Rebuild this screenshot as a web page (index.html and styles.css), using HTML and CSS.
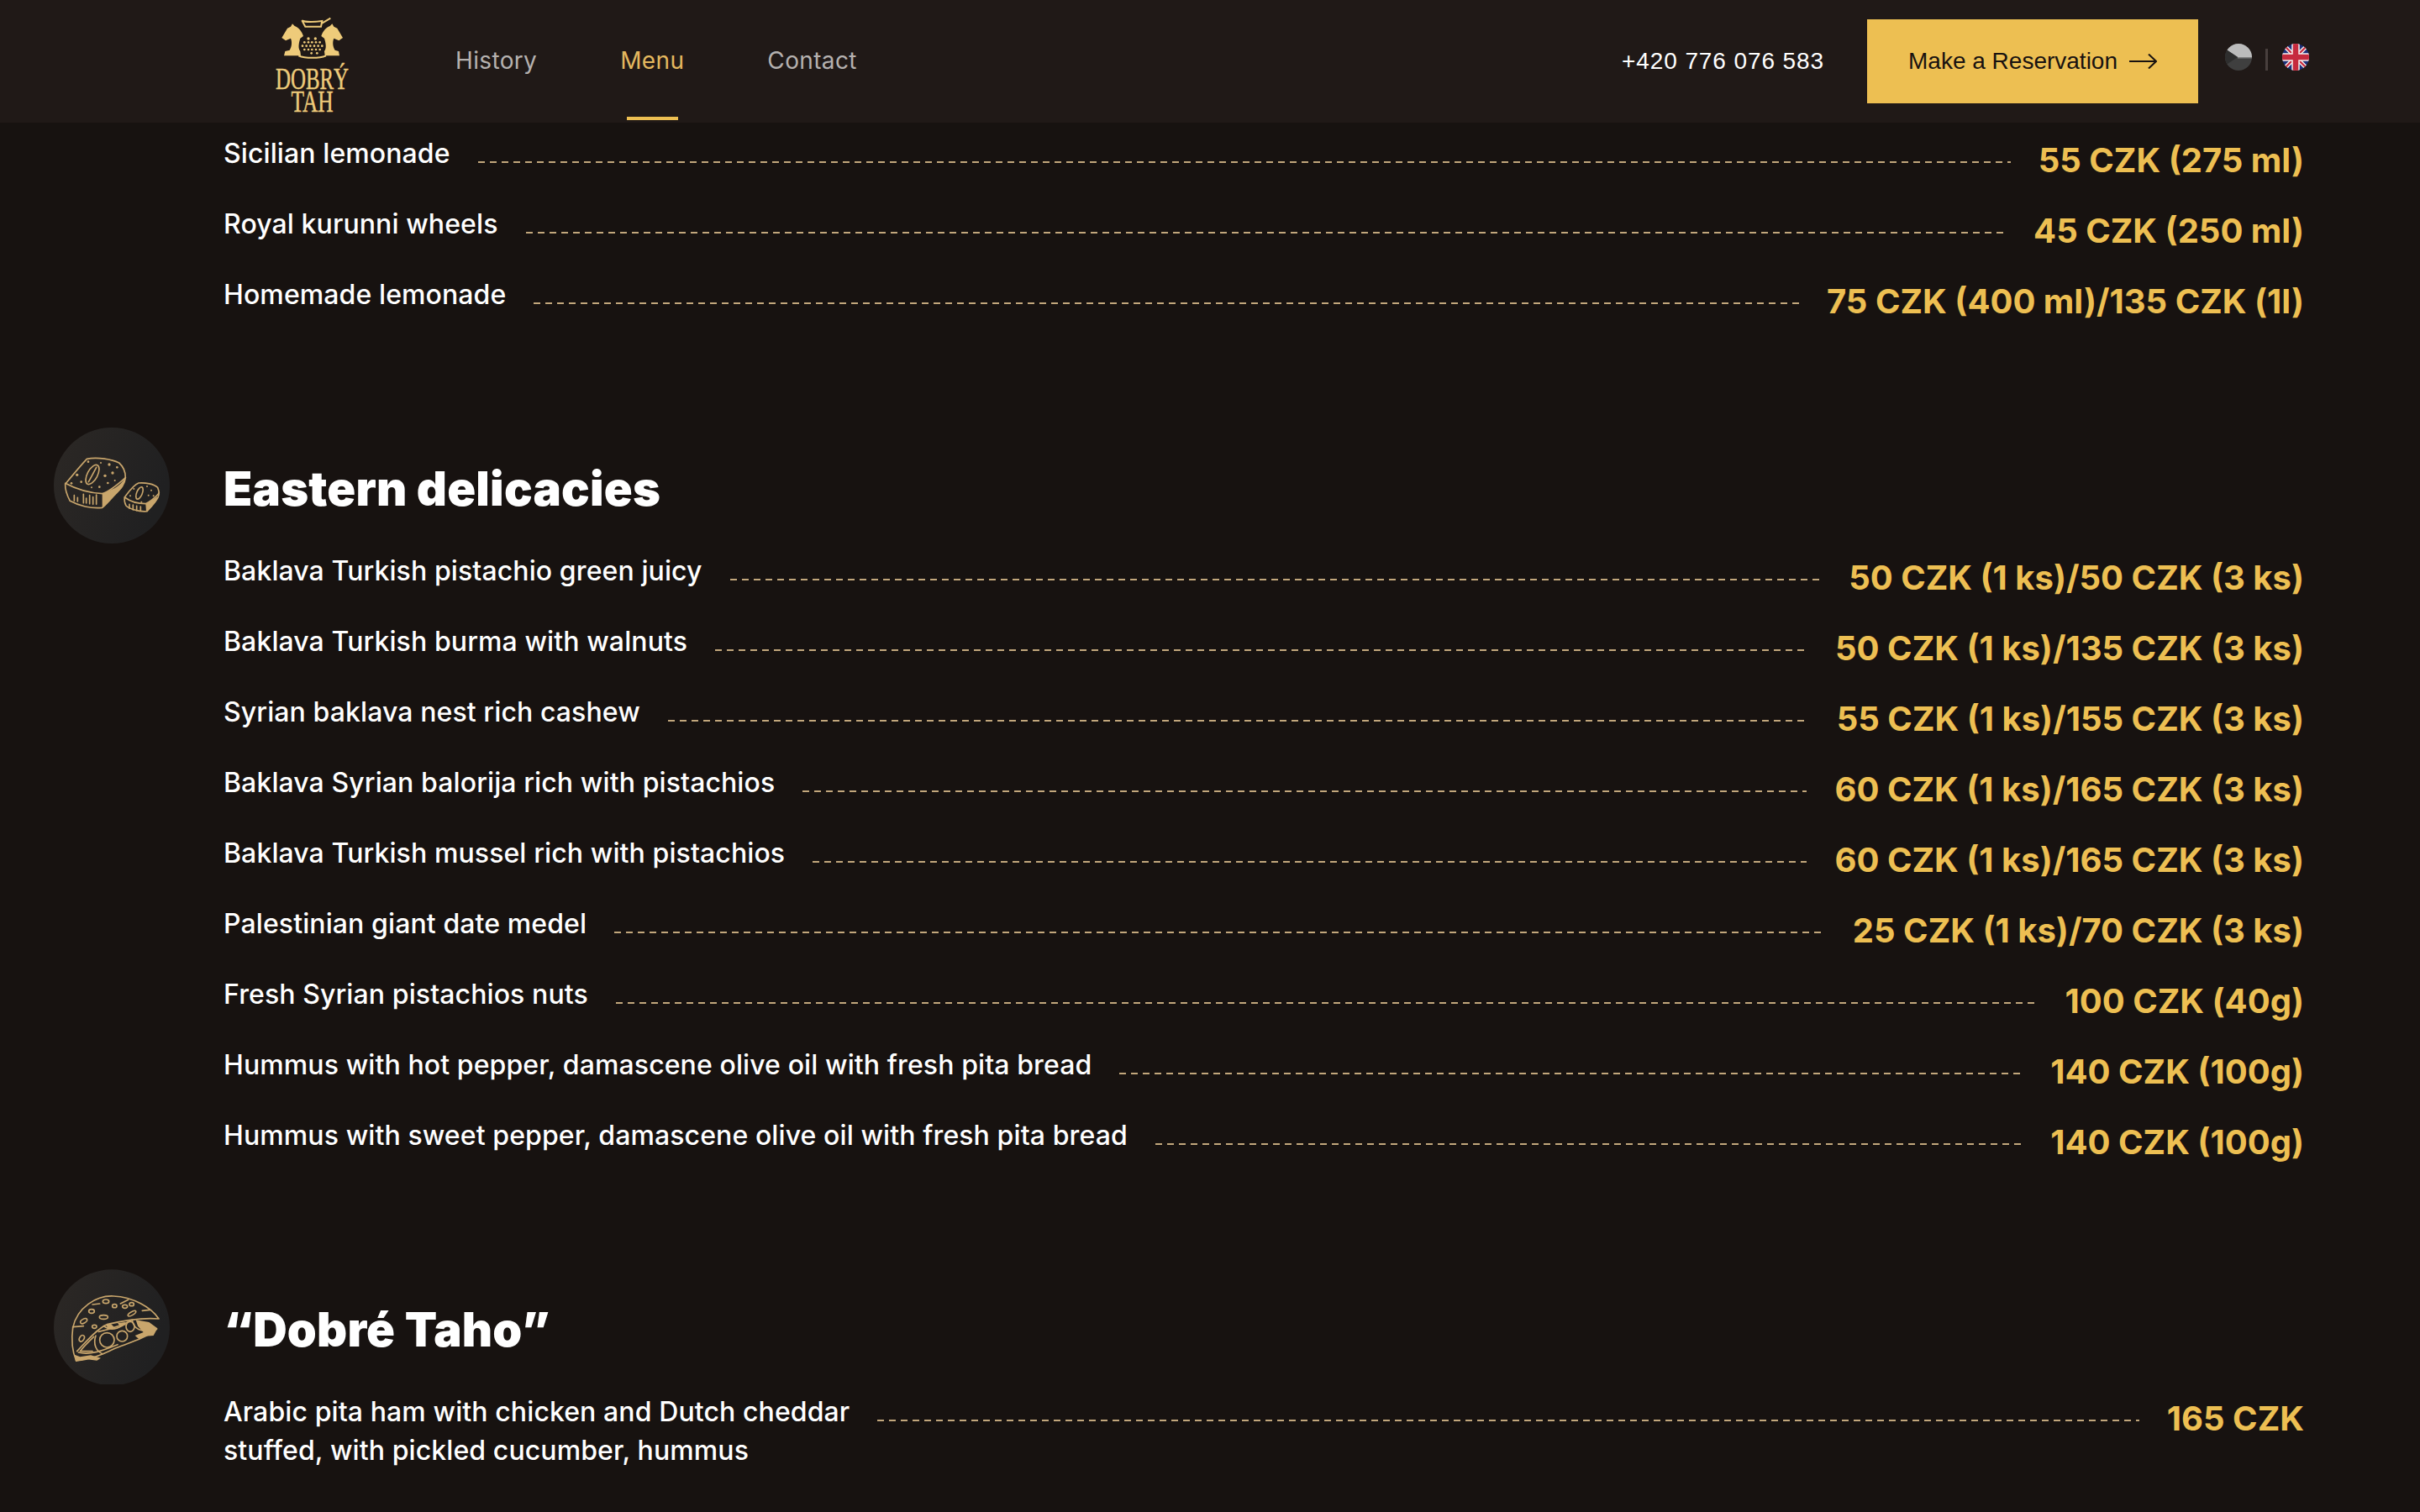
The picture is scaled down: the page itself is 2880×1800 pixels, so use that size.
FILE: index.html
```html
<!DOCTYPE html>
<html lang="en">
<head>
<meta charset="utf-8">
<title>Dobrý Tah – Menu</title>
<link rel="stylesheet" href="styles.css">
</head>
<body>
<header class="topbar">
  <a class="logo" href="#">
    <svg class="logo-mark" width="150" height="135">
      <g transform="scale(0.3333)">
      <g class="logo-fill">
        <path d="M106 102 L126 68 L138 62 L144 52 L152 60 C166 65 178 80 183 96 L172 104 C167 120 163 138 172 150 L174 166 L114 166 L118 150 L134 146 C141 135 144 118 138 104 L120 112 Z"/>
        <path d="M324 102 L304 68 L292 62 L286 52 L278 60 C264 65 252 80 247 96 L258 104 C263 120 267 138 258 150 L260 166 L312 166 L309 150 L296 146 C289 135 286 118 292 104 L310 112 Z"/>
        <circle cx="201" cy="105" r="5"/><circle cx="226" cy="105" r="5"/>
        <circle cx="187" cy="118" r="4"/><circle cx="201" cy="118" r="4"/><circle cx="214" cy="118" r="4"/><circle cx="228" cy="118" r="4"/><circle cx="242" cy="118" r="4"/>
        <circle cx="180" cy="131" r="4"/><circle cx="194" cy="131" r="4"/><circle cx="208" cy="131" r="4"/><circle cx="222" cy="131" r="4"/><circle cx="236" cy="131" r="4"/><circle cx="250" cy="131" r="4"/>
        <circle cx="187" cy="144" r="4"/><circle cx="201" cy="144" r="4"/><circle cx="214" cy="144" r="4"/><circle cx="228" cy="144" r="4"/><circle cx="242" cy="144" r="4"/>
        <circle cx="212" cy="157" r="4"/><circle cx="232" cy="157" r="4"/>
      </g>
      <path class="logo-line" d="M178 40 C190 48 235 44 250 42 L246 62 L190 62 Z M250 50 L280 32 M166 166 C190 176 240 176 264 166"/>
      </g>
      <text class="logo-word" x="28" y="94.5" textLength="87" lengthAdjust="spacingAndGlyphs">DOBRÝ</text>
      <text class="logo-word" x="46.5" y="122" textLength="50" lengthAdjust="spacingAndGlyphs">TAH</text>
    </svg>
  </a>
  <nav class="nav">
    <a class="nav-link" href="#">History</a>
    <a class="nav-link nav-active" href="#">Menu</a>
    <a class="nav-link" href="#">Contact</a>
  </nav>
  <div class="top-actions">
    <a class="phone" href="#">+420 776 076 583</a>
    <a class="reserve" href="#">Make a Reservation
      <svg class="arrow" viewBox="0 0 33 18"><path d="M0 9 H32 M23 0.5 L32 9 L23 17.5"/></svg>
    </a>
    <div class="langs">
      <svg class="flag" viewBox="0 0 32 32">
        <clipPath id="c1"><circle cx="16" cy="16" r="16"/></clipPath>
        <g clip-path="url(#c1)">
          <rect width="32" height="32" fill="#3f3f3f"/>
          <path d="M0 6 L15 16 H32 V0 H0 Z" fill="#bcbcbc"/>
          <path d="M0 6 L15 16 L0 26 Z" fill="#2e2e2e"/>
          <rect x="15" y="16" width="17" height="1.5" fill="#7e7e7e"/>
        </g>
      </svg>
      <span class="lang-sep"></span>
      <svg class="flag" viewBox="0 0 32 32">
        <clipPath id="c2"><circle cx="16" cy="16" r="16"/></clipPath>
        <g clip-path="url(#c2)">
          <rect width="32" height="32" fill="#1c2f7a"/>
          <path d="M0 0 L32 32 M32 0 L0 32" stroke="#f4f0ee" stroke-width="5"/>
          <path d="M0 0 L32 32 M32 0 L0 32" stroke="#c8283c" stroke-width="2.2"/>
          <path d="M16 0 V32 M0 16 H32" stroke="#f4f0ee" stroke-width="9.5"/>
          <path d="M16 0 V32 M0 16 H32" stroke="#c62a3e" stroke-width="6.5"/>
        </g>
      </svg>
    </div>
  </div>
</header>

<main class="menu">
  <section class="group">
    <div class="badge-slot"></div>
    <div class="group-body">
      <div class="row"><span class="name">Sicilian lemonade</span><span class="dash"></span><span class="price">55 CZK (275 ml)</span></div>
      <div class="row"><span class="name">Royal kurunni wheels</span><span class="dash"></span><span class="price">45 CZK (250 ml)</span></div>
      <div class="row"><span class="name">Homemade lemonade</span><span class="dash"></span><span class="price">75 CZK (400 ml)/135 CZK (1l)</span></div>
    </div>
  </section>

  <section class="group">
    <div class="badge-slot">
      <svg class="badge" viewBox="72 56 414 414">
        <defs>
          <linearGradient id="g1" x1="0" y1="0" x2="1" y2="0.4"><stop offset="0" stop-color="#2c2825"/><stop offset="1" stop-color="#202021"/></linearGradient>
        </defs>
        <circle cx="279" cy="263" r="207" fill="url(#g1)"/>
        <g class="ink">
          <path d="M113 258 C140 225 165 195 190 168 C230 160 280 170 305 182 C320 195 328 215 328 235 C325 262 310 275 290 295 C275 312 260 330 245 342 C205 346 160 335 130 318 C118 295 112 275 113 258 Z"/>
          <path d="M113 255 C150 275 200 290 245 292 C270 285 300 260 328 235"/>
          <ellipse cx="210" cy="224" rx="18" ry="38" transform="rotate(28 210 224)"/>
          <path d="M196 250 C205 235 215 215 224 198 M145 318 V298 M157 320 V306 M178 325 V294 M188 326 V308 M200 328 V298 M212 330 V304 M224 330 V296"/>
          <ellipse cx="378" cy="290" rx="10" ry="23" transform="rotate(22 378 290)"/>
          <path d="M325 305 C340 285 355 262 375 254 C400 252 430 258 443 270 C452 290 448 305 435 320 L405 355 C375 358 340 345 330 335 C325 325 323 315 325 305 Z"/>
          <path d="M325 305 C345 320 370 328 400 328 C420 318 435 305 448 290 M342 345 V330 M355 350 V332 M368 352 V336 M382 354 V338"/>
        </g>
        <g class="ink-fill">
          <path d="M245 292 L290 272 C305 262 318 250 325 238 C326 265 305 285 285 303 L245 342 Z"/>
          <path d="M400 330 L442 302 C442 320 420 345 402 356 Z"/>
          <circle cx="155" cy="225" r="5"/><circle cx="170" cy="250" r="4"/><circle cx="135" cy="255" r="4"/>
          <circle cx="195" cy="178" r="4"/><circle cx="240" cy="182" r="3"/><circle cx="270" cy="188" r="5"/><circle cx="298" cy="198" r="4"/>
          <circle cx="255" cy="228" r="5"/><circle cx="282" cy="218" r="5"/><circle cx="265" cy="254" r="4"/><circle cx="235" cy="268" r="4"/><circle cx="207" cy="270" r="3"/><circle cx="290" cy="245" r="3"/>
          <circle cx="405" cy="266" r="3"/><circle cx="420" cy="280" r="3"/><circle cx="345" cy="300" r="3"/><circle cx="358" cy="275" r="3"/><circle cx="410" cy="298" r="3"/><circle cx="428" cy="300" r="3"/><circle cx="385" cy="322" r="3"/>
        </g>
      </svg>
    </div>
    <div class="group-body">
      <h2 class="title">Eastern delicacies</h2>
      <div class="row"><span class="name">Baklava Turkish pistachio green juicy</span><span class="dash"></span><span class="price">50 CZK (1 ks)/50 CZK (3 ks)</span></div>
      <div class="row"><span class="name">Baklava Turkish burma with walnuts</span><span class="dash"></span><span class="price">50 CZK (1 ks)/135 CZK (3 ks)</span></div>
      <div class="row"><span class="name">Syrian baklava nest rich cashew</span><span class="dash"></span><span class="price">55 CZK (1 ks)/155 CZK (3 ks)</span></div>
      <div class="row"><span class="name">Baklava Syrian balorija rich with pistachios</span><span class="dash"></span><span class="price">60 CZK (1 ks)/165 CZK (3 ks)</span></div>
      <div class="row"><span class="name">Baklava Turkish mussel rich with pistachios</span><span class="dash"></span><span class="price">60 CZK (1 ks)/165 CZK (3 ks)</span></div>
      <div class="row"><span class="name">Palestinian giant date medel</span><span class="dash"></span><span class="price">25 CZK (1 ks)/70 CZK (3 ks)</span></div>
      <div class="row"><span class="name">Fresh Syrian pistachios nuts</span><span class="dash"></span><span class="price">100 CZK (40g)</span></div>
      <div class="row"><span class="name">Hummus with hot pepper, damascene olive oil with fresh pita bread</span><span class="dash"></span><span class="price">140 CZK (100g)</span></div>
      <div class="row"><span class="name">Hummus with sweet pepper, damascene olive oil with fresh pita bread</span><span class="dash"></span><span class="price">140 CZK (100g)</span></div>
    </div>
  </section>

  <section class="group">
    <div class="badge-slot">
      <svg class="badge" viewBox="72 56 414 414">
        <defs>
          <linearGradient id="g2" x1="0" y1="0" x2="1" y2="0.4"><stop offset="0" stop-color="#2c2825"/><stop offset="1" stop-color="#202021"/></linearGradient>
        </defs>
        <circle cx="279" cy="267" r="207" fill="url(#g2)"/>
        <g class="ink">
          <path d="M140 268 C155 195 225 152 285 155 C355 158 420 195 447 236 C400 232 330 240 262 256 C225 272 185 320 155 352"/>
          <path d="M140 268 C135 305 135 345 152 386"/>
          <path d="M140 265 L178 262 M210 185 L236 182 M310 182 L338 168 M388 207 L415 204"/>
          <ellipse cx="258" cy="174" rx="11" ry="7"/><ellipse cx="289" cy="190" rx="8" ry="6"/><ellipse cx="326" cy="192" rx="9" ry="6"/><ellipse cx="350" cy="184" rx="8" ry="6"/>
          <ellipse cx="207" cy="209" rx="10" ry="7"/><ellipse cx="351" cy="217" rx="16" ry="6" transform="rotate(-30 351 217)"/>
          <ellipse cx="250" cy="230" rx="15" ry="7"/><ellipse cx="179" cy="244" rx="13" ry="7" transform="rotate(-30 179 244)"/><ellipse cx="217" cy="264" rx="8" ry="6"/>
          <ellipse cx="172" cy="306" rx="8" ry="12" transform="rotate(30 172 306)"/>
          <path d="M152 386 C200 380 230 372 290 342 C340 322 400 305 440 272 M160 356 C200 366 240 352 300 328 M222 296 C212 326 222 352 248 362 M232 282 C280 272 320 258 352 240 M352 240 C356 270 382 288 432 272"/>
          <circle cx="262" cy="312" r="26"/><circle cx="316" cy="298" r="19"/><ellipse cx="345" cy="264" rx="15" ry="18"/>
          <path d="M215 300 C196 318 178 336 166 352 L210 352 M250 262 C268 276 290 276 318 260"/>
        </g>
        <path class="crumb" d="M150 388 L146 364 L166 372 L204 366 L240 376 L226 385 L192 381 Z M365 240 L412 248 L442 270 L428 296 L398 298 L378 310 L362 296 L392 284 L372 262 Z M258 258 L276 254 L290 268 L268 274 Z M300 252 L326 248 L330 258 L310 264 Z"/>
      </svg>
    </div>
    <div class="group-body">
      <h2 class="title">“Dobré Taho”</h2>
      <div class="row"><span class="name">Arabic pita ham with chicken and Dutch cheddar<br>stuffed, with pickled cucumber, hummus</span><span class="dash"></span><span class="price">165 CZK</span></div>
    </div>
  </section>
</main>
</body>
</html>
```

FILE: styles.css
```css
* { box-sizing: border-box; }
html, body { margin: 0; height: 1800px; overflow: hidden; }
body {
  background: #171210;
  color: #fff;
  font-family: Inter, "Liberation Sans", sans-serif;
}
a { color: inherit; text-decoration: none; }

.topbar {
  height: 146px;
  background: #201917;
  display: flex;
  align-items: center;
  padding-left: 300px;
  padding-right: 132px;
}
.logo { display: block; width: 150px; height: 135px; margin-top: 10px; flex: none; }
.logo-mark { display: block; }
.logo-fill { fill: #eecb7a; }
.logo-line { fill: none; stroke: #eecb7a; stroke-width: 6; }
.logo-word { fill: #eecb7a; stroke: #eecb7a; stroke-width: 0.5; font-family: "Liberation Serif", serif; font-size: 35px; }

.nav { display: flex; gap: 99px; margin-left: 92px; margin-top: -2px; }
.nav-link { position: relative; font-size: 28px; line-height: 40px; color: #b5b1af; letter-spacing: 0.35px; }
.nav-active { color: #e4b85f; }
.nav-active::after {
  content: "";
  position: absolute;
  left: 8px;
  right: 7px;
  top: 87px;
  height: 4px;
  background: #edbf52;
}

.top-actions { margin-left: auto; display: flex; align-items: center; }
.phone {
  font-family: "Liberation Sans", sans-serif;
  font-size: 28px;
  letter-spacing: 0.9px;
  margin-right: 51px;
}
.reserve {
  width: 394px;
  height: 100px;
  background: #edbf52;
  color: #181210;
  font-family: "Liberation Sans", sans-serif;
  font-size: 28px;
  display: flex;
  align-items: center;
  gap: 14px;
  padding-left: 49px;
  white-space: nowrap;
}
.arrow { width: 33px; height: 18px; fill: none; stroke: #181210; stroke-width: 2; flex: none; }
.langs { display: flex; align-items: center; margin-left: 32px; margin-top: -10px; }
.flag { width: 32px; height: 32px; display: block; }
.lang-sep { width: 3px; height: 26px; background: #483f3d; margin: 6px 17px 0 16px; }

.menu { padding: 11px 138px 0 64px; display: flex; flex-direction: column; gap: 100px; }
.group { display: grid; grid-template-columns: 138px 1fr; column-gap: 64px; }
.badge { width: 138px; height: 138px; display: block; }
.ink { fill: none; stroke: #c9a66c; stroke-width: 5; stroke-linejoin: round; stroke-linecap: round; }
.ink-fill { fill: #c9a66c; }
.crumb { fill: #c9a66c; }

.title {
  margin: 31px 0 30px;
  font-size: 56px;
  line-height: 84px;
  font-weight: 900;
  letter-spacing: 0.2px;
}
.row { display: flex; align-items: flex-start; margin-bottom: 16px; }
.name { font-size: 32px; line-height: 46px; margin-top: 3px; flex: none; font-weight: 500; letter-spacing: 0.1px; }
.dash {
  flex: 1;
  height: 2px;
  margin: 35px 33px 0;
  background: linear-gradient(to right, #c2a77c 8px, transparent 8px) 0 0 / 14px 2px repeat-x;
}
.price { font-size: 40px; line-height: 68px; font-weight: 700; color: #edbf52; flex: none; white-space: nowrap; }
```
